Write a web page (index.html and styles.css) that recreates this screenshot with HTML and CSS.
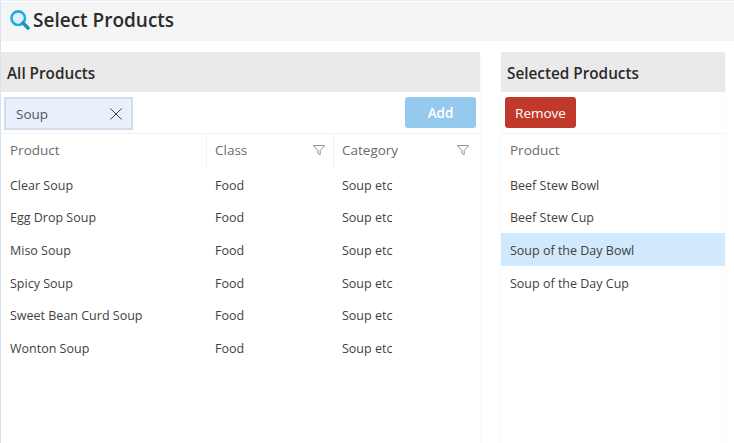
FILE: index.html
```html
<!DOCTYPE html>
<html lang="en">
<head>
	<meta charset="UTF-8">
	<title>Select Products</title>
	<link rel="stylesheet" href="styles.css">
</head>
<body>
	<div class="page">
		<div class="title">
			<svg class="title-icon" width="20" height="20" viewBox="0 0 20 20">
				<circle cx="8.2" cy="8.2" r="6.8" fill="#d8f0fb" stroke="#26a9e0" stroke-width="2.6"/>
				<path d="M13 13L18 18" stroke="#1f8fc4" stroke-width="3.6" stroke-linecap="round"/>
			</svg>
			<h1>Select Products</h1>
		</div>
		<div class="panels">
			<div class="panel all">
				<h2>All Products</h2>
				<div class="tools">
					<div class="search">
						<span>Soup</span>
						<svg width="12" height="12" viewBox="0 0 12 12"><path d="M.5.5l11 11M11.5.5l-11 11" stroke="#444" fill="none"/></svg>
					</div>
					<button class="btn add">Add</button>
				</div>
				<div class="row head">
					<div class="cell c1">Product</div>
					<div class="cell c2">Class<svg class="filter" width="12" height="11" viewBox="0 0 12 11"><path d="M.5.5h11L7.2 5.5v4.2L4.8 8.2V5.5z" fill="none" stroke="#888" stroke-width=".9"/></svg></div>
					<div class="cell c3">Category<svg class="filter" width="12" height="11" viewBox="0 0 12 11"><path d="M.5.5h11L7.2 5.5v4.2L4.8 8.2V5.5z" fill="none" stroke="#888" stroke-width=".9"/></svg></div>
				</div>
				<div class="row"><div class="cell c1">Clear Soup</div><div class="cell c2">Food</div><div class="cell c3">Soup etc</div></div>
				<div class="row"><div class="cell c1">Egg Drop Soup</div><div class="cell c2">Food</div><div class="cell c3">Soup etc</div></div>
				<div class="row"><div class="cell c1">Miso Soup</div><div class="cell c2">Food</div><div class="cell c3">Soup etc</div></div>
				<div class="row"><div class="cell c1">Spicy Soup</div><div class="cell c2">Food</div><div class="cell c3">Soup etc</div></div>
				<div class="row"><div class="cell c1">Sweet Bean Curd Soup</div><div class="cell c2">Food</div><div class="cell c3">Soup etc</div></div>
				<div class="row"><div class="cell c1">Wonton Soup</div><div class="cell c2">Food</div><div class="cell c3">Soup etc</div></div>
			</div>
			<div class="panel selected">
				<h2>Selected Products</h2>
				<div class="tools">
					<button class="btn remove">Remove</button>
				</div>
				<div class="row head"><div class="cell">Product</div></div>
				<div class="row"><div class="cell">Beef Stew Bowl</div></div>
				<div class="row"><div class="cell">Beef Stew Cup</div></div>
				<div class="row active"><div class="cell">Soup of the Day Bowl</div></div>
				<div class="row"><div class="cell">Soup of the Day Cup</div></div>
			</div>
		</div>
	</div>
</body>
</html>
```

FILE: styles.css
```css
html, body{margin: 0; padding: 0; background: #fff;}
body{font-family: "Open Sans", "Noto Sans", sans-serif; color: #3f3f3f; font-size: 12.5px;}
.page{width: 734px; height: 443px; overflow: hidden; box-sizing: border-box; border-left: 1px solid #cfe4f7; border-top: 1px solid #eaf3fb; padding-top: 1px;}
.title{height: 39px; box-sizing: border-box; background: #f5f5f5; display: flex; align-items: center; padding: 0 0 3px 9px;}
.title-icon{margin-right: 3px;}
h1{margin: 0; font-size: 19px; font-weight: 600; color: #2b2b2b;}
.panels{display: flex; gap: 19px; margin-top: 11px; height: 391px;}
.panel{display: flex; flex-direction: column;}
.all{width: 479px; border-right: 1px solid #fafafa;}
.selected{width: 224px; border-left: 1px solid #fafafa; border-right: 1px solid #fafafa;}
h2{margin: 0; height: 40px; line-height: 43px; background: #eaeaea; font-size: 15.3px; font-weight: 600; color: #2b2b2b; padding-left: 6px;}
.tools{height: 42px; box-sizing: border-box; display: flex; align-items: flex-start; justify-content: space-between; padding: 5px 4px 0 3px; border-bottom: 1px solid #f1f1f1;}
.search{width: 129px; height: 33px; box-sizing: border-box; background: #e8f1fb; border: 2px solid #d3dde8; display: flex; align-items: center; justify-content: space-between; padding: 0 9px 0 10px; font-size: 13.5px; color: #555;}
.btn{height: 31px; border: none; border-radius: 3px; color: #fff; font-family: inherit; font-size: 13.5px; padding: 0;}
.add{width: 71px; background: #95c9ee; font-weight: 600;}
.remove{width: 71px; background: #c0392b; margin-left: 1px;}
.row{display: flex; height: 32.7px; line-height: 36px;}
.row.head{height: 33.7px; line-height: 33px; color: #6b6b6b; font-size: 13.5px;}
.cell{padding-left: 9px; flex: 1; position: relative;}
.c1{flex: none; width: 196px;}
.c2{flex: none; width: 118px;}
.c3{flex: none; width: 137px;}
.c3 .filter{right: 10px;}
.head .c2, .head .c3{border-left: 1px solid #f1f1f1; padding-left: 8px;}
.filter{position: absolute; right: 8px; top: 11px;}
.active{background: #d0e9fc;}
```
